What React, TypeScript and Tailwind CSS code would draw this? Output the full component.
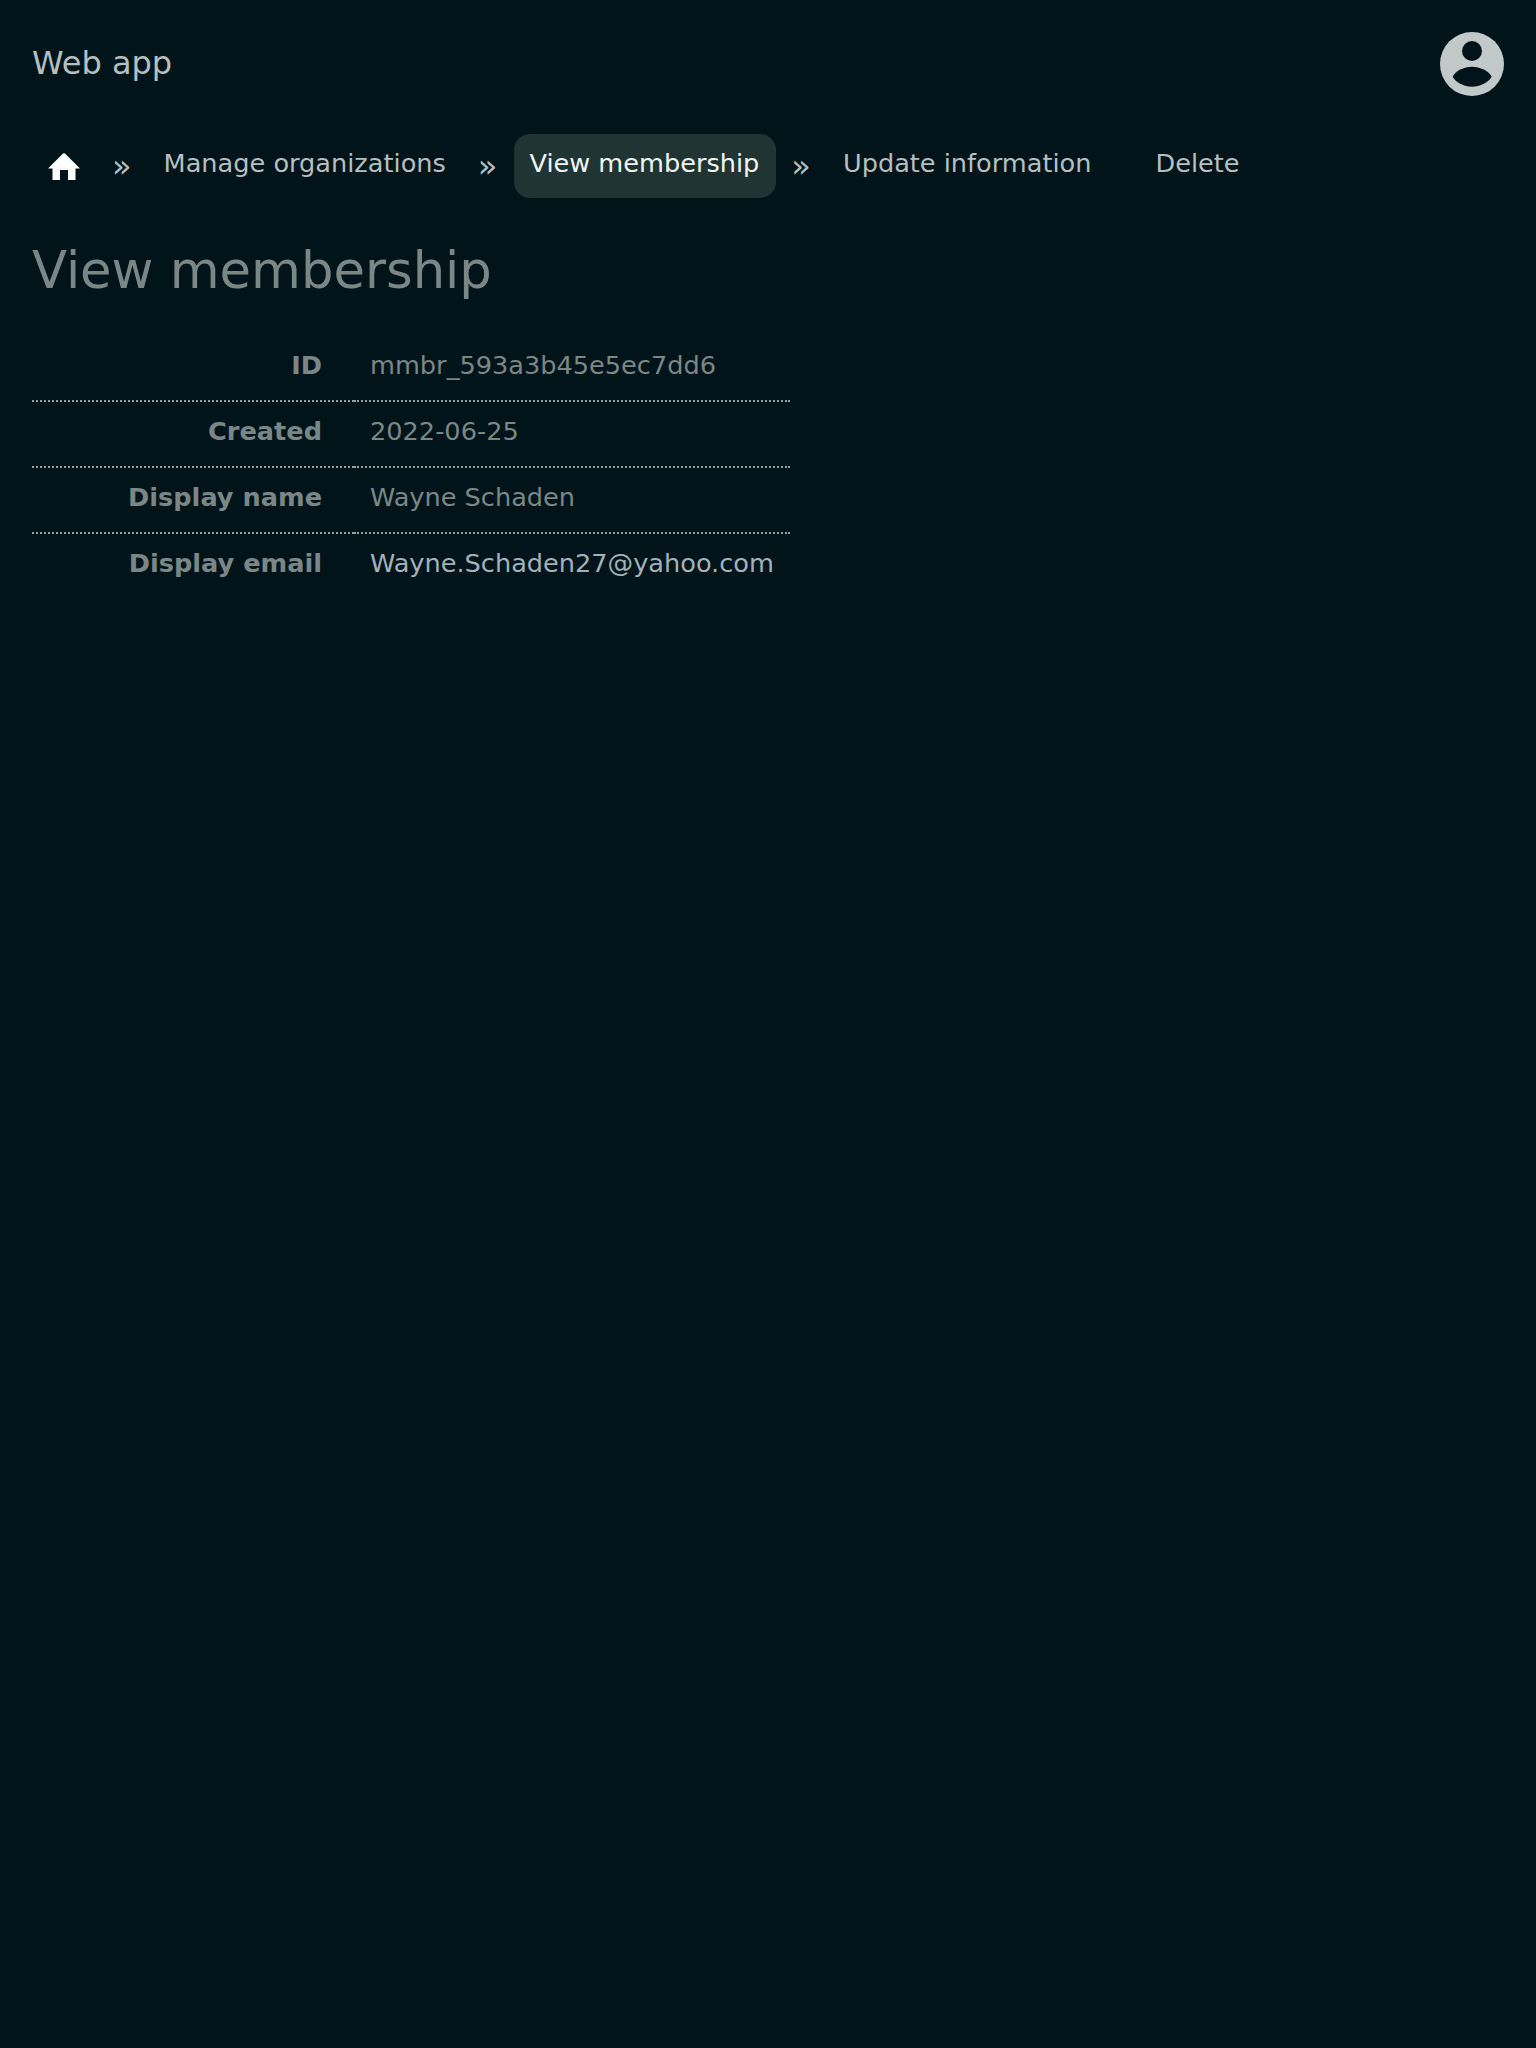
const rows = [
  { label: "ID", value: "mmbr_593a3b45e5ec7dd6", tone: "text-[#7b8787]" },
  { label: "Created", value: "2022-06-25", tone: "text-[#7b8787]" },
  { label: "Display name", value: "Wayne Schaden", tone: "text-[#7b8787]" },
  { label: "Display email", value: "Wayne.Schaden27@yahoo.com", tone: "text-[#a3b1bb]" },
];

function HomeIcon() {
  return (
    <svg viewBox="0 0 32 27" className="w-8 h-[27px] fill-white">
      <path d="M15 .6Q16 0 17 .6L32 15.5 27.5 15.5 27.5 27 20 27 20 17 12 17 12 27 4.5 27 4.5 15.5 0 15.5Z" />
    </svg>
  );
}

function Avatar() {
  return (
    <svg viewBox="0 0 64 64" className="w-16 h-16">
      <circle cx="32" cy="32" r="32" fill="#c2c9c9" />
      <circle cx="32" cy="19" r="10" fill="#00141a" />
      <path d="M12.7 44.7C15 39 24 34.7 32 34.7S49 39 51.7 44.7C49 50 40 54.7 32 54.7S15 50 12.7 44.7Z" fill="#00141a" />
    </svg>
  );
}

function Sep() {
  return <span className="px-4 text-[#b6bfbf] text-[32px] leading-none pt-[16px]">»</span>;
}

export default function App() {
  return (
    <div className="min-h-[2048px] bg-[#00141a] font-['DejaVu_Sans',sans-serif]">
      <header className="flex items-center justify-between px-8 pt-8">
        <span className="text-[32px] text-[#b6bfbf] -mt-[2px]">Web app</span>
        <Avatar />
      </header>

      <nav className="flex items-start px-8 mt-[38px] text-[25.6px] text-[#b6bfbf]">
        <a className="px-4 pt-[19px]"><HomeIcon /></a>
        <Sep />
        <a className="px-4 h-16 pt-[10px]">Manage organizations</a>
        <Sep />
        <a className="ml-px -mr-px pl-[15px] pr-[17px] h-16 pt-[10px] bg-[#203533] rounded-2xl text-[#f2f5f5]">View membership</a>
        <Sep />
        <a className="px-4 h-16 pt-[10px]">Update information</a>
        <a className="px-4 h-16 pt-[10px] ml-8">Delete</a>
      </nav>

      <main className="px-8 mt-[47px]">
        <h1 className="text-[51.2px] font-normal text-[#7b8787] leading-none">View membership</h1>
        <table className="mt-[39px] border-collapse text-[25.6px]">
          <tbody>
            {rows.map((r, i) => (
              <tr key={r.label}>
                <th className={`w-[322px] h-[66px] pr-8 text-right font-bold text-[#7b8787] ${i < 3 ? "pb-[6px] border-b-2 border-dotted border-[#95a1a1]" : "pb-2"}`}>
                  {r.label}
                </th>
                <td className={`h-[66px] px-4 w-[436px] ${r.tone} ${i < 3 ? "pb-[6px] border-b-2 border-dotted border-[#95a1a1]" : "pb-2"}`}>
                  {r.value}
                </td>
              </tr>
            ))}
          </tbody>
        </table>
      </main>
    </div>
  );
}
